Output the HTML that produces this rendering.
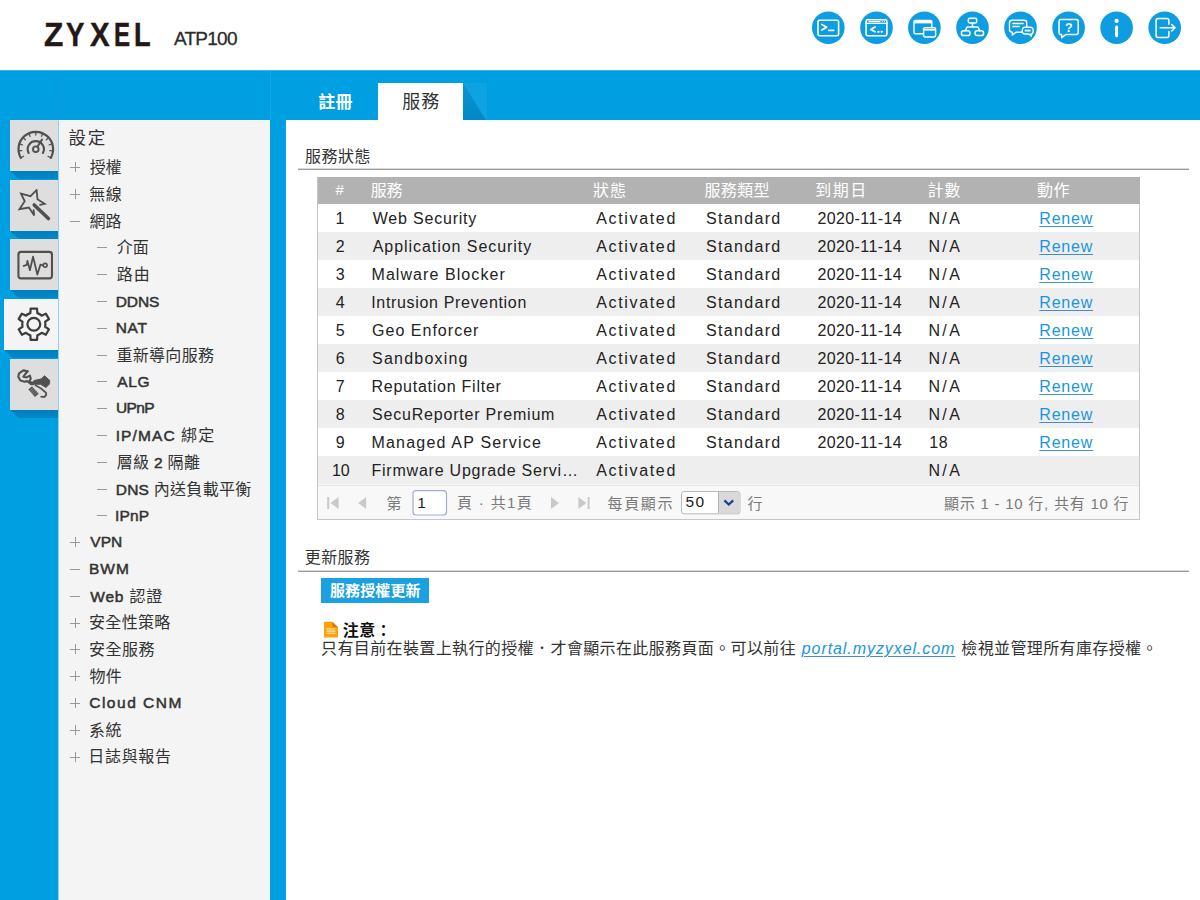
<!DOCTYPE html>
<html lang="zh-Hant">
<head>
<meta charset="utf-8">
<title>ZYXEL ATP100</title>
<style>
*{box-sizing:border-box;margin:0;padding:0}
html,body{width:1200px;height:900px;overflow:hidden;background:#fff}
body{position:relative;font-family:"Liberation Sans","Noto Sans CJK TC",sans-serif;color:#222;font-size:16px}
#hdr{position:absolute;left:0;top:0;width:1200px;height:70px;background:#fff}
#blue{position:absolute;left:0;top:70px;width:1200px;height:830px;background:#009fe1}
#menu{position:absolute;left:58px;top:120px;width:212px;height:780px;background:#f4f4f4;border-top:1px solid #fdfdfd;border-left:1px solid #8ad1f4}
#content{position:absolute;left:286px;top:120px;width:914px;height:780px;background:#fff}
.stab{position:absolute;left:10px;width:48px;height:51px;background:#dedede}
.stab.act{left:4px;width:55px;background:#f4f4f4}
.stab svg{position:absolute;left:0;top:0}
.sshadow{position:absolute;height:8px;background:linear-gradient(to bottom,#007fbd,#0088c8);clip-path:polygon(0 0,100% 0,100% 100%,9px 100%)}
.t{position:absolute;white-space:nowrap;line-height:24px;height:24px;color:#333}
.b{font-weight:bold}
.sb{font-weight:normal;-webkit-text-stroke:0.5px #333}
.sb .n{-webkit-text-stroke:0}
.n{font-weight:normal}
.pm{position:absolute;width:10px;height:10px}
.pm i{position:absolute;display:block}
.tab2{position:absolute;left:378px;top:83px;width:85px;height:37px;background:#fff}
.tabsh{position:absolute;left:463px;top:83px;width:23px;height:37px;background:linear-gradient(to bottom,#0a95d5,#0087c6);clip-path:polygon(0 0,100% 100%,0 100%)}
.tabsh2{position:absolute;left:463px;top:83px;width:24px;height:37px;background:#0da3e3}
.rule{position:absolute;left:298px;width:891px;height:2px;background:linear-gradient(to bottom,#d9d9d9 0,#d9d9d9 50%,#9b9b9b 50%,#9b9b9b 100%)}
#grid{position:absolute;left:317px;top:177px;width:823px;height:343px;border:1px solid #c6c6c6;border-top:none;background:#f8f8f8}
#ghead{position:absolute;left:0;top:0;width:822px;height:27px;background:#b2b2b2}
.row{position:absolute;left:0;width:821px;height:28px}
.row.alt{background:#eeeeee}
.row.wh{background:#fff}
a.l{color:#1b95e0;text-decoration:underline;text-decoration-thickness:1.4px;text-decoration-color:#3f8fd2;text-underline-offset:1.5px}
.inp{position:absolute;background:#fff;border:1px solid #a9b0d6;border-radius:3px}
#btn{position:absolute;left:321px;top:578px;width:108px;height:25px;background:#1ba0e2}
</style>
</head>
<body>
<div id="hdr"><div id="logo" style="position:absolute;left:0;top:0;width:170px;height:70px"><span style="position:absolute;left:44.03px;top:15px;font-weight:bold;font-size:32.5px;line-height:40px;color:#231815;-webkit-text-stroke:0.45px #231815;transform:scaleX(0.972);transform-origin:0 0;display:block">Z</span><span style="position:absolute;left:66.16px;top:15px;font-weight:bold;font-size:32.5px;line-height:40px;color:#231815;-webkit-text-stroke:0.45px #231815;transform:scaleX(0.849);transform-origin:0 0;display:block">Y</span><span style="position:absolute;left:89.77px;top:15px;font-weight:bold;font-size:32.5px;line-height:40px;color:#231815;-webkit-text-stroke:0.45px #231815;transform:scaleX(0.905);transform-origin:0 0;display:block">X</span><span style="position:absolute;left:114.34px;top:15px;font-weight:bold;font-size:32.5px;line-height:40px;color:#231815;-webkit-text-stroke:0.45px #231815;transform:scaleX(0.740);transform-origin:0 0;display:block">E</span><span style="position:absolute;left:133.62px;top:15px;font-weight:bold;font-size:32.5px;line-height:40px;color:#231815;-webkit-text-stroke:0.45px #231815;transform:scaleX(0.836);transform-origin:0 0;display:block">L</span></div><svg style="position:absolute;left:800px;top:0" width="400" height="60" viewBox="800 0 400 60" fill="none" stroke="#fff" stroke-width="1.6" stroke-linecap="round" stroke-linejoin="round">
<g stroke="none" fill="#0d9de0">
<circle cx="828.3" cy="27.8" r="16.3"/><circle cx="876.5" cy="27.8" r="16.3"/><circle cx="924.4" cy="27.8" r="16.3"/><circle cx="972.5" cy="27.8" r="16.3"/>
<circle cx="1020.5" cy="27.8" r="16.3"/><circle cx="1068.6" cy="27.8" r="16.3"/><circle cx="1116.6" cy="27.8" r="16.3"/><circle cx="1164.7" cy="27.8" r="16.3"/>
</g>
<!-- terminal -->
<g transform="translate(828.3 27.8)">
<rect x="-10.3" y="-7.6" width="20.6" height="15.6" rx="1.6"/>
<path d="M-6.4 -3.4 L-1.6 -0.6 L-6.4 2.2" stroke-width="1.7"/><path d="M0.4 2.6 H5.4" stroke-width="1.6"/>
</g>
<!-- code window -->
<g transform="translate(876.5 27.8)">
<rect x="-10.4" y="-8" width="20.8" height="16" rx="1.6"/>
<path d="M-10.4 -4.4 H10.4" stroke-width="1.3"/>
<path d="M-1.4 -0.8 L-5.8 1.6 L-1.4 4" stroke-width="1.7"/>
<path d="M1.6 4 h.6 M5 4 h.6" stroke-width="1.9"/>
<path d="M5.6 -6.2 h.2 M7.8 -6.2 h.2" stroke-width="1" /><path d="M-7.6 -6.2 H3.4" stroke-width="1.1"/>
</g>
<!-- windows -->
<g transform="translate(924.4 27.8)">
<rect x="-10.4" y="-7.4" width="17.8" height="13.4" rx="1.2" stroke-width="1.4"/>
<path d="M-9.8 -5.6 H6.8" stroke-width="2.4" stroke-linecap="butt"/>
<rect x="-0.8" y="-0.2" width="12" height="9.4" rx="1.4" fill="#0d9de0" stroke-width="1.4"/>
<path d="M-0.2 1.9 H10.6" stroke-width="1.9" stroke-linecap="butt"/>
</g>
<!-- network -->
<g transform="translate(972.5 27.8)" stroke-width="1.5">
<rect x="-4.2" y="-9.6" width="8.4" height="4.8" rx="1.6"/>
<path d="M0 -4.8 V-1 M-5.4 -0.8 H5.4 M-5.4 -0.8 L-7.4 3 M5.4 -0.8 L7.4 3"/>
<rect x="-11" y="3" width="8.4" height="4.8" rx="1.9"/>
<rect x="2.6" y="3" width="8.4" height="4.8" rx="1.9"/>
</g>
<!-- chat -->
<g transform="translate(1020.5 27.8)" stroke-width="1.4">
<path d="M-8.4 -7.6 H3.6 a2.6 2.6 0 0 1 2.6 2.6 V1.8 a2.6 2.6 0 0 1 -2.6 2.6 H-4.6 L-8.2 7.2 V4.4 H-8.4 a2.6 2.6 0 0 1 -2.6 -2.6 V-5 a2.6 2.6 0 0 1 2.6 -2.6 Z"/>
<path d="M-7.6 -4.4 H2.6 M-7.6 -1.4 H-1.4" stroke-width="1.5"/>
<path d="M4.4 -0.6 H10 a2.6 2.6 0 0 1 2.6 2.6 V3.6 a2.6 2.6 0 0 1 -2.6 2.6 H10.9 V8.4 L8.2 6.2 H4.4 a2.6 2.6 0 0 1 -2.6 -2.6 V2 a2.6 2.6 0 0 1 2.6 -2.6 Z" fill="#0d9de0"/>
<path d="M4.8 2.8 H9.6" stroke-width="1.6"/>
</g>
<!-- help -->
<g transform="translate(1068.6 27.8)" stroke-width="1.5">
<path d="M-8 -8.2 H8 a1.6 1.6 0 0 1 1.6 1.6 V5 a1.6 1.6 0 0 1 -1.6 1.6 H-2.4 L-7 9.8 V6.6 H-8 a1.6 1.6 0 0 1 -1.6 -1.6 V-6.6 a1.6 1.6 0 0 1 1.6 -1.6 Z"/>
<text x="0.3" y="3.9" text-anchor="middle" font-family="Liberation Sans, sans-serif" font-weight="bold" font-size="12.5" fill="#fff" stroke="none">?</text>
</g>
<!-- info -->
<g transform="translate(1116.6 27.8)" stroke="none" fill="#fff">
<circle cx="0" cy="-6.9" r="2.1"/><rect x="-1.5" y="-2.2" width="3" height="11.6" rx="1.3"/>
</g>
<!-- logout -->
<g transform="translate(1164.7 27.8)" stroke-width="1.5">
<path d="M4.2 -3.6 V-7.4 a2 2 0 0 0 -2 -2 H-6.6 a2 2 0 0 0 -2 2 V7.6 a2 2 0 0 0 2 2 H2.2 a2 2 0 0 0 2 -2 V3.6"/>
<path d="M-4.6 0 H10.2 M7 -3.2 L10.4 0 L7 3.2"/>
</g>
</svg></div>
<div id="blue"></div><div style="position:absolute;left:0;top:70px;width:1200px;height:1px;background:#3db4e9"></div><div style="position:absolute;left:270px;top:71px;width:1px;height:49px;background:#17a7e5"></div><div style="position:absolute;left:59px;top:71px;width:1px;height:49px;background:#0f98d8"></div>
<div class="sshadow" style="top:171px;left:10px;width:49px"></div>
<div class="stab" style="top:120px"><svg width="49" height="51" viewBox="0 0 49 51" fill="none" stroke="#505050" stroke-linecap="round" stroke-linejoin="round"><path d="M10.82 37.85 A17.3 17.3 0 1 1 40.78 37.85" stroke-width="2.2"/><path d="M40.09 37.45L38.01 36.25M42.21 30.92L39.82 30.67M41.49 24.10L39.21 24.84M38.06 18.16L36.28 19.77M32.51 14.13L31.53 16.32M25.80 12.70L25.80 15.10M19.09 14.13L20.07 16.32M13.54 18.16L15.32 19.77M10.11 24.10L12.39 24.84M9.39 30.92L11.78 30.67M11.51 37.45L13.59 36.25" stroke-width="1.3"/><path d="M18.65 33.00 A8.1 8.1 0 1 1 32.95 33.00" stroke-width="2.1"/><circle cx="25.80" cy="29.20" r="2.8" stroke-width="1.9"/><path d="M27.40 26.80 L32.00 19.60" stroke-width="2"/></svg></div>
<div class="sshadow" style="top:231px;left:10px;width:49px"></div>
<div class="stab" style="top:180px"><svg width="49" height="51" viewBox="0 0 49 51" fill="none" stroke="#505050" stroke-linecap="round" stroke-linejoin="miter"><path d="M26.56 10.17 L20.49 16.16 L11.0 13.67 L14.73 21.29 L9.44 29.22 L18.93 27.51 L24.22 35.44 L23.6 30.16" stroke-width="1.8"/><path d="M30.06 24.94 L34.72 23.78 L27.49 19.27 L26.56 10.17" stroke-width="1.8"/><path d="M24.22 24.94 L38.38 38.56" stroke-width="3.6"/></svg></div>
<div class="sshadow" style="top:290px;left:10px;width:49px"></div>
<div class="stab" style="top:239px"><svg width="49" height="51" viewBox="0 0 49 51" fill="none" stroke="#505050" stroke-linecap="round" stroke-linejoin="round"><rect x="8.43" y="12.88" width="33.53" height="26.52" rx="2.6" stroke-width="2.1"/><path d="M13.72 26.96 L16.83 25.94 L17.38 21.82 L19.94 31.16 L23.06 17.62 L27.33 35.51 L30.44 25.71 L32.62 26.02" stroke-width="1.8"/><circle cx="35.11" cy="26.33" r="1.9" stroke-width="1.7"/></svg></div>
<div class="sshadow" style="top:350px;left:4px;width:55px"></div>
<div class="stab act" style="top:299px"><svg width="55" height="51" viewBox="0 0 55 51" fill="none" stroke="#3c3c3c" stroke-linecap="round" stroke-linejoin="round"><path d="M33.32 14.16 L33.02 9.54 L26.64 9.54 L26.35 14.16 A11.6 11.6 0 0 0 22.0 16.67 L17.85 14.62 L14.66 20.15 L18.51 22.71 A11.6 11.6 0 0 0 18.51 27.73 L14.66 30.3 L17.85 35.82 L22.0 33.77 A11.6 11.6 0 0 0 26.35 36.29 L26.64 40.9 L33.02 40.9 L33.32 36.29 A11.6 11.6 0 0 0 37.67 33.77 L41.82 35.82 L45.01 30.3 L41.16 27.73 A11.6 11.6 0 0 0 41.16 22.71 L45.01 20.15 L41.82 14.62 L37.67 16.67 A11.6 11.6 0 0 0 33.32 14.16 Z" stroke-width="2.2"/><circle cx="29.83" cy="25.22" r="6.4" stroke-width="2.2"/></svg></div>
<div class="sshadow" style="top:410px;left:10px;width:49px"></div>
<div class="stab" style="top:359px"><svg width="49" height="51" viewBox="0 0 49 51" fill="none" stroke="#505050" stroke-linecap="round" stroke-linejoin="round"><path d="M17.61 12.39 L13.33 11.38 L9.06 14.33 L8.28 17.83 L10.38 21.49 L14.73 22.73 L17.38 22.11 L21.11 25.22" stroke-width="2.1"/><path d="M17.61 12.39 L14.73 15.73 L13.33 17.83 L16.44 18.38 L19.94 16.67 L20.72 19.78 L19.56 22.11 L23.06 25.22" stroke-width="2.1"/><path d="M21.5 24.06 L24.22 21.49 L31.22 19.93 L34.49 16.82 L39.78 21.49 L39.16 25.22 L36.04 28.49 L30.44 25.22 L25.0 25.22 Z" fill="#505050" stroke-width="1"/><path d="M20.18 28.8 L27.02 36.58" stroke-width="5" stroke-linecap="butt" stroke-dasharray="1.75 0.3"/><path d="M25.39 26.16 Q30.44 28.33 35.89 33.62 Q37.11 36.11 34.33 38.06 L31.22 37.67" stroke-width="1.7"/></svg></div>
<div id="menu"></div>
<span class="pm" style="left:70px;top:162px"><i style="left:0;top:4.5px;width:10px;height:1px;background:#999"></i><i style="left:4.5px;top:0;width:1px;height:10px;background:#999"></i></span>
<span class="pm" style="left:70px;top:189px"><i style="left:0;top:4.5px;width:10px;height:1px;background:#999"></i><i style="left:4.5px;top:0;width:1px;height:10px;background:#999"></i></span>
<span class="pm" style="left:70px;top:216px"><i style="left:0;top:4.5px;width:10px;height:1px;background:#999"></i></span>
<span class="pm" style="left:96.5px;top:242px"><i style="left:0;top:4.5px;width:10px;height:1px;background:#999"></i></span>
<span class="pm" style="left:96.5px;top:269px"><i style="left:0;top:4.5px;width:10px;height:1px;background:#999"></i></span>
<span class="pm" style="left:96.5px;top:296px"><i style="left:0;top:4.5px;width:10px;height:1px;background:#999"></i></span>
<span class="pm" style="left:96.5px;top:323px"><i style="left:0;top:4.5px;width:10px;height:1px;background:#999"></i></span>
<span class="pm" style="left:96.5px;top:350px"><i style="left:0;top:4.5px;width:10px;height:1px;background:#999"></i></span>
<span class="pm" style="left:96.5px;top:376px"><i style="left:0;top:4.5px;width:10px;height:1px;background:#999"></i></span>
<span class="pm" style="left:96.5px;top:403px"><i style="left:0;top:4.5px;width:10px;height:1px;background:#999"></i></span>
<span class="pm" style="left:96.5px;top:430px"><i style="left:0;top:4.5px;width:10px;height:1px;background:#999"></i></span>
<span class="pm" style="left:96.5px;top:457px"><i style="left:0;top:4.5px;width:10px;height:1px;background:#999"></i></span>
<span class="pm" style="left:96.5px;top:484px"><i style="left:0;top:4.5px;width:10px;height:1px;background:#999"></i></span>
<span class="pm" style="left:96.5px;top:510px"><i style="left:0;top:4.5px;width:10px;height:1px;background:#999"></i></span>
<span class="pm" style="left:70px;top:537px"><i style="left:0;top:4.5px;width:10px;height:1px;background:#999"></i><i style="left:4.5px;top:0;width:1px;height:10px;background:#999"></i></span>
<span class="pm" style="left:70px;top:564px"><i style="left:0;top:4.5px;width:10px;height:1px;background:#999"></i></span>
<span class="pm" style="left:70px;top:591px"><i style="left:0;top:4.5px;width:10px;height:1px;background:#999"></i></span>
<span class="pm" style="left:70px;top:618px"><i style="left:0;top:4.5px;width:10px;height:1px;background:#999"></i><i style="left:4.5px;top:0;width:1px;height:10px;background:#999"></i></span>
<span class="pm" style="left:70px;top:644px"><i style="left:0;top:4.5px;width:10px;height:1px;background:#999"></i><i style="left:4.5px;top:0;width:1px;height:10px;background:#999"></i></span>
<span class="pm" style="left:70px;top:671px"><i style="left:0;top:4.5px;width:10px;height:1px;background:#999"></i><i style="left:4.5px;top:0;width:1px;height:10px;background:#999"></i></span>
<span class="pm" style="left:70px;top:698px"><i style="left:0;top:4.5px;width:10px;height:1px;background:#999"></i><i style="left:4.5px;top:0;width:1px;height:10px;background:#999"></i></span>
<span class="pm" style="left:70px;top:725px"><i style="left:0;top:4.5px;width:10px;height:1px;background:#999"></i><i style="left:4.5px;top:0;width:1px;height:10px;background:#999"></i></span>
<span class="pm" style="left:70px;top:752px"><i style="left:0;top:4.5px;width:10px;height:1px;background:#999"></i><i style="left:4.5px;top:0;width:1px;height:10px;background:#999"></i></span>
<div id="content"></div>
<div class="tabsh2"></div><div class="tabsh"></div><div class="tab2"></div>
<div class="rule" style="top:168px"></div><div class="rule" style="top:570px"></div>
<div id="grid"><div id="ghead"></div><div class="row wh" style="top:27px"></div><div class="row alt" style="top:55px"></div><div class="row wh" style="top:83px"></div><div class="row alt" style="top:111px"></div><div class="row wh" style="top:139px"></div><div class="row alt" style="top:167px"></div><div class="row wh" style="top:195px"></div><div class="row alt" style="top:223px"></div><div class="row wh" style="top:251px"></div><div class="row alt" style="top:279px"></div></div>
<svg style="position:absolute;left:317px;top:485px" width="823" height="35" viewBox="317 485 823 35">
<line x1="318" y1="485.5" x2="1139" y2="485.5" stroke="#e4e4e4" stroke-width="1"/>
<g fill="#c9c9c9">
<rect x="327.2" y="497" width="2" height="12"/><path d="M338.6 497 L338.6 509 L330.4 503 Z"/>
<path d="M366.2 497 L366.2 509 L358.2 503 Z"/>
<path d="M551 497 L551 509 L559 503 Z"/>
<path d="M578.4 497 L578.4 509 L586.4 503 Z"/><rect x="587.6" y="497" width="2" height="12"/>
</g>
<rect x="413" y="490.7" width="33.5" height="24.3" rx="3" fill="#fff" stroke="#a4abd4" stroke-width="1.2"/>
<rect x="681.5" y="491.5" width="58.5" height="22.3" rx="2.5" fill="#fff" stroke="#b9b9b9" stroke-width="1"/>
<path d="M718.5 492 H737.5 a2 2 0 0 1 2 2 V511.3 a2 2 0 0 1 -2 2 H718.5 Z" fill="#d9d9d9"/>
<path d="M718.5 492 V513.3" stroke="#b5b5b5" stroke-width="1"/>
<path d="M724.4 500.4 L728.8 504.6 L733.2 500.4" fill="none" stroke="#1d3f8f" stroke-width="2.2" stroke-linejoin="miter"/>
</svg>
<div id="btn"></div>
<svg style="position:absolute;left:323px;top:621px" width="16" height="18" viewBox="0 0 16 18">
<path d="M1.8 0.8 H9.4 L15 6.2 V15.8 a0.8 0.8 0 0 1 -0.8 0.8 H1.8 a0.8 0.8 0 0 1 -0.8 -0.8 V1.6 a0.8 0.8 0 0 1 0.8 -0.8 Z" fill="#ffa10a"/>
<path d="M9.4 0.8 L15 6.2 H10.2 a0.8 0.8 0 0 1 -0.8 -0.8 Z" fill="#d27f06"/>
<path d="M3.4 7.8 H12.4 M3.4 10.1 H12.4 M3.4 12.4 H12.4" stroke="#ffe2b0" stroke-width="1.3"/>
</svg>
<span id="model" class="t " style="left:174.00px;top:27.30px;font-size:19px;color:#2b2b2b;letter-spacing:-0.760px;-webkit-text-stroke:0.3px #2b2b2b;">ATP100</span>
<span id="mtitle" class="t " style="left:68.40px;top:125.90px;font-size:17.5px;color:#333;letter-spacing:1.850px;">設定</span>
<span id="m0" class="t " style="left:89.80px;top:156.10px;font-size:16px;color:#333;letter-spacing:-0.300px;">授權</span>
<span id="m1" class="t " style="left:89.30px;top:183.10px;font-size:16px;color:#333;letter-spacing:0.450px;">無線</span>
<span id="m2" class="t " style="left:89.55px;top:209.90px;font-size:16px;color:#333;letter-spacing:-0.050px;">網路</span>
<span id="m3" class="t " style="left:116.70px;top:236.40px;font-size:16px;color:#333;letter-spacing:0.050px;">介面</span>
<span id="m4" class="t " style="left:116.70px;top:263.40px;font-size:16px;color:#333;letter-spacing:1.050px;">路由</span>
<span id="m5" class="t sb" style="left:115.70px;top:289.90px;font-size:15.5px;color:#333;letter-spacing:-0.068px;">DDNS</span>
<span id="m6" class="t sb" style="left:115.70px;top:316.10px;font-size:15.5px;color:#333;letter-spacing:0.675px;">NAT</span>
<span id="m7" class="t " style="left:116.45px;top:344.00px;font-size:16px;color:#333;letter-spacing:0.310px;">重新導向服務</span>
<span id="m8" class="t sb" style="left:117.20px;top:369.80px;font-size:15.5px;color:#333;letter-spacing:0.650px;">ALG</span>
<span id="m9" class="t sb" style="left:115.95px;top:395.90px;font-size:15.5px;color:#333;letter-spacing:-0.651px;">UPnP</span>
<span id="m10" class="t sb" style="left:115.70px;top:424.40px;font-size:15.5px;color:#333;letter-spacing:1.101px;">IP/MAC <span class="n" style="font-size:16px">綁定</span></span>
<span id="m11" class="t sb" style="left:116.70px;top:451.00px;font-size:15.5px;color:#333;letter-spacing:0.334px;"><span class="n" style="font-size:16px">層級</span> 2 <span class="n" style="font-size:16px">隔離</span></span>
<span id="m12" class="t sb" style="left:115.70px;top:477.60px;font-size:15.5px;color:#333;letter-spacing:0.273px;">DNS <span class="n" style="font-size:16px">內送負載平衡</span></span>
<span id="m13" class="t sb" style="left:115.05px;top:503.50px;font-size:15.5px;color:#333;letter-spacing:0.151px;">IPnP</span>
<span id="m14" class="t sb" style="left:90.30px;top:530.30px;font-size:15.5px;color:#333;letter-spacing:0.075px;">VPN</span>
<span id="m15" class="t sb" style="left:89.05px;top:557.40px;font-size:15.5px;color:#333;letter-spacing:0.950px;">BWM</span>
<span id="m16" class="t sb" style="left:90.30px;top:584.60px;font-size:15.5px;color:#333;letter-spacing:0.800px;">Web <span class="n" style="font-size:16px">認證</span></span>
<span id="m17" class="t " style="left:89.05px;top:611.40px;font-size:16px;color:#333;letter-spacing:0.298px;">安全性策略</span>
<span id="m18" class="t " style="left:89.05px;top:638.40px;font-size:16px;color:#333;letter-spacing:0.484px;">安全服務</span>
<span id="m19" class="t " style="left:89.55px;top:664.90px;font-size:16px;color:#333;letter-spacing:0.200px;">物件</span>
<span id="m20" class="t sb" style="left:89.20px;top:690.90px;font-size:15.5px;color:#333;letter-spacing:1.520px;">Cloud CNM</span>
<span id="m21" class="t " style="left:89.05px;top:718.90px;font-size:16px;color:#333;letter-spacing:0.450px;">系統</span>
<span id="m22" class="t " style="left:88.25px;top:745.40px;font-size:16px;color:#333;letter-spacing:0.688px;">日誌與報告</span>
<span id="tab1" class="t b" style="left:318.25px;top:91.30px;font-size:17px;color:#fff;letter-spacing:0.250px;">註冊</span>
<span id="tab2" class="t " style="left:402.25px;top:89.80px;font-size:18px;color:#333;letter-spacing:1.000px;">服務</span>
<span id="sec1" class="t " style="left:305.00px;top:144.60px;font-size:16px;color:#333;letter-spacing:0.500px;">服務狀態</span>
<span id="sec2" class="t " style="left:304.80px;top:546.00px;font-size:16px;color:#333;letter-spacing:0.382px;">更新服務</span>
<span id="h0" class="t " style="left:335.48px;top:178.00px;font-size:15px;color:#fff;letter-spacing:0.000px;">#</span>
<span id="h1" class="t " style="left:370.75px;top:179.00px;font-size:16px;color:#fff;letter-spacing:-0.250px;">服務</span>
<span id="h2" class="t " style="left:593.00px;top:179.00px;font-size:16px;color:#fff;letter-spacing:1.000px;">狀態</span>
<span id="h3" class="t " style="left:704.50px;top:179.00px;font-size:16px;color:#fff;letter-spacing:0.333px;">服務類型</span>
<span id="h4" class="t " style="left:815.15px;top:179.00px;font-size:16px;color:#fff;letter-spacing:1.550px;">到期日</span>
<span id="h5" class="t " style="left:927.45px;top:179.00px;font-size:16px;color:#fff;letter-spacing:1.000px;">計數</span>
<span id="h6" class="t " style="left:1037.05px;top:179.00px;font-size:16px;color:#fff;letter-spacing:0.450px;">動作</span>
<span id="r0n" class="t " style="left:335.50px;top:207.00px;font-size:16px;color:#222;letter-spacing:0.000px;">1</span>
<span id="r0s" class="t " style="left:372.75px;top:207.00px;font-size:16px;color:#222;letter-spacing:0.795px;">Web Security</span>
<span id="r0a" class="t " style="left:596.25px;top:207.00px;font-size:16px;color:#222;letter-spacing:1.656px;">Activated</span>
<span id="r0t" class="t " style="left:706.00px;top:207.00px;font-size:16px;color:#222;letter-spacing:1.321px;">Standard</span>
<span id="r0d" class="t " style="left:817.40px;top:207.00px;font-size:16px;color:#222;letter-spacing:0.405px;">2020-11-14</span>
<span id="r0r" class="t " style="left:1039.30px;top:207.00px;font-size:16px;color:#1b95e0;letter-spacing:0.774px;"><a class="l">Renew</a></span>
<span id="r0c" class="t " style="left:928.45px;top:207.00px;font-size:16px;color:#222;letter-spacing:2.375px;">N/A</span>
<span id="r1n" class="t " style="left:335.75px;top:235.00px;font-size:16px;color:#222;letter-spacing:0.000px;">2</span>
<span id="r1s" class="t " style="left:372.75px;top:235.00px;font-size:16px;color:#222;letter-spacing:0.947px;">Application Security</span>
<span id="r1a" class="t " style="left:596.25px;top:235.00px;font-size:16px;color:#222;letter-spacing:1.656px;">Activated</span>
<span id="r1t" class="t " style="left:706.00px;top:235.00px;font-size:16px;color:#222;letter-spacing:1.321px;">Standard</span>
<span id="r1d" class="t " style="left:817.40px;top:235.00px;font-size:16px;color:#222;letter-spacing:0.405px;">2020-11-14</span>
<span id="r1r" class="t " style="left:1039.30px;top:235.00px;font-size:16px;color:#1b95e0;letter-spacing:0.774px;"><a class="l">Renew</a></span>
<span id="r1c" class="t " style="left:928.45px;top:235.00px;font-size:16px;color:#222;letter-spacing:2.375px;">N/A</span>
<span id="r2n" class="t " style="left:335.75px;top:263.00px;font-size:16px;color:#222;letter-spacing:0.000px;">3</span>
<span id="r2s" class="t " style="left:371.50px;top:263.00px;font-size:16px;color:#222;letter-spacing:1.071px;">Malware Blocker</span>
<span id="r2a" class="t " style="left:596.25px;top:263.00px;font-size:16px;color:#222;letter-spacing:1.656px;">Activated</span>
<span id="r2t" class="t " style="left:706.00px;top:263.00px;font-size:16px;color:#222;letter-spacing:1.321px;">Standard</span>
<span id="r2d" class="t " style="left:817.40px;top:263.00px;font-size:16px;color:#222;letter-spacing:0.405px;">2020-11-14</span>
<span id="r2r" class="t " style="left:1039.30px;top:263.00px;font-size:16px;color:#1b95e0;letter-spacing:0.774px;"><a class="l">Renew</a></span>
<span id="r2c" class="t " style="left:928.45px;top:263.00px;font-size:16px;color:#222;letter-spacing:2.375px;">N/A</span>
<span id="r3n" class="t " style="left:335.75px;top:291.00px;font-size:16px;color:#222;letter-spacing:0.000px;">4</span>
<span id="r3s" class="t " style="left:371.25px;top:291.00px;font-size:16px;color:#222;letter-spacing:0.671px;">Intrusion Prevention</span>
<span id="r3a" class="t " style="left:596.25px;top:291.00px;font-size:16px;color:#222;letter-spacing:1.656px;">Activated</span>
<span id="r3t" class="t " style="left:706.00px;top:291.00px;font-size:16px;color:#222;letter-spacing:1.321px;">Standard</span>
<span id="r3d" class="t " style="left:817.40px;top:291.00px;font-size:16px;color:#222;letter-spacing:0.405px;">2020-11-14</span>
<span id="r3r" class="t " style="left:1039.30px;top:291.00px;font-size:16px;color:#1b95e0;letter-spacing:0.774px;"><a class="l">Renew</a></span>
<span id="r3c" class="t " style="left:928.45px;top:291.00px;font-size:16px;color:#222;letter-spacing:2.375px;">N/A</span>
<span id="r4n" class="t " style="left:335.76px;top:319.00px;font-size:16px;color:#222;letter-spacing:0.000px;">5</span>
<span id="r4s" class="t " style="left:372.00px;top:319.00px;font-size:16px;color:#222;letter-spacing:1.023px;">Geo Enforcer</span>
<span id="r4a" class="t " style="left:596.25px;top:319.00px;font-size:16px;color:#222;letter-spacing:1.656px;">Activated</span>
<span id="r4t" class="t " style="left:706.00px;top:319.00px;font-size:16px;color:#222;letter-spacing:1.321px;">Standard</span>
<span id="r4d" class="t " style="left:817.40px;top:319.00px;font-size:16px;color:#222;letter-spacing:0.405px;">2020-11-14</span>
<span id="r4r" class="t " style="left:1039.30px;top:319.00px;font-size:16px;color:#1b95e0;letter-spacing:0.774px;"><a class="l">Renew</a></span>
<span id="r4c" class="t " style="left:928.45px;top:319.00px;font-size:16px;color:#222;letter-spacing:2.375px;">N/A</span>
<span id="r5n" class="t " style="left:335.63px;top:347.00px;font-size:16px;color:#222;letter-spacing:0.000px;">6</span>
<span id="r5s" class="t " style="left:372.00px;top:347.00px;font-size:16px;color:#222;letter-spacing:1.222px;">Sandboxing</span>
<span id="r5a" class="t " style="left:596.25px;top:347.00px;font-size:16px;color:#222;letter-spacing:1.656px;">Activated</span>
<span id="r5t" class="t " style="left:706.00px;top:347.00px;font-size:16px;color:#222;letter-spacing:1.321px;">Standard</span>
<span id="r5d" class="t " style="left:817.40px;top:347.00px;font-size:16px;color:#222;letter-spacing:0.405px;">2020-11-14</span>
<span id="r5r" class="t " style="left:1039.30px;top:347.00px;font-size:16px;color:#1b95e0;letter-spacing:0.774px;"><a class="l">Renew</a></span>
<span id="r5c" class="t " style="left:928.45px;top:347.00px;font-size:16px;color:#222;letter-spacing:2.375px;">N/A</span>
<span id="r6n" class="t " style="left:335.75px;top:375.00px;font-size:16px;color:#222;letter-spacing:0.000px;">7</span>
<span id="r6s" class="t " style="left:371.50px;top:375.00px;font-size:16px;color:#222;letter-spacing:0.750px;">Reputation Filter</span>
<span id="r6a" class="t " style="left:596.25px;top:375.00px;font-size:16px;color:#222;letter-spacing:1.656px;">Activated</span>
<span id="r6t" class="t " style="left:706.00px;top:375.00px;font-size:16px;color:#222;letter-spacing:1.321px;">Standard</span>
<span id="r6d" class="t " style="left:817.40px;top:375.00px;font-size:16px;color:#222;letter-spacing:0.405px;">2020-11-14</span>
<span id="r6r" class="t " style="left:1039.30px;top:375.00px;font-size:16px;color:#1b95e0;letter-spacing:0.774px;"><a class="l">Renew</a></span>
<span id="r6c" class="t " style="left:928.45px;top:375.00px;font-size:16px;color:#222;letter-spacing:2.375px;">N/A</span>
<span id="r7n" class="t " style="left:335.76px;top:403.00px;font-size:16px;color:#222;letter-spacing:0.000px;">8</span>
<span id="r7s" class="t " style="left:372.00px;top:403.00px;font-size:16px;color:#222;letter-spacing:0.802px;">SecuReporter Premium</span>
<span id="r7a" class="t " style="left:596.25px;top:403.00px;font-size:16px;color:#222;letter-spacing:1.656px;">Activated</span>
<span id="r7t" class="t " style="left:706.00px;top:403.00px;font-size:16px;color:#222;letter-spacing:1.321px;">Standard</span>
<span id="r7d" class="t " style="left:817.40px;top:403.00px;font-size:16px;color:#222;letter-spacing:0.405px;">2020-11-14</span>
<span id="r7r" class="t " style="left:1039.30px;top:403.00px;font-size:16px;color:#1b95e0;letter-spacing:0.774px;"><a class="l">Renew</a></span>
<span id="r7c" class="t " style="left:928.45px;top:403.00px;font-size:16px;color:#222;letter-spacing:2.375px;">N/A</span>
<span id="r8n" class="t " style="left:335.76px;top:431.00px;font-size:16px;color:#222;letter-spacing:0.000px;">9</span>
<span id="r8s" class="t " style="left:371.50px;top:431.00px;font-size:16px;color:#222;letter-spacing:1.191px;">Managed AP Service</span>
<span id="r8a" class="t " style="left:596.25px;top:431.00px;font-size:16px;color:#222;letter-spacing:1.656px;">Activated</span>
<span id="r8t" class="t " style="left:706.00px;top:431.00px;font-size:16px;color:#222;letter-spacing:1.321px;">Standard</span>
<span id="r8d" class="t " style="left:817.40px;top:431.00px;font-size:16px;color:#222;letter-spacing:0.405px;">2020-11-14</span>
<span id="r8r" class="t " style="left:1039.30px;top:431.00px;font-size:16px;color:#1b95e0;letter-spacing:0.774px;"><a class="l">Renew</a></span>
<span id="r8c" class="t " style="left:929.25px;top:431.00px;font-size:16px;color:#222;letter-spacing:0.500px;">18</span>
<span id="r9n" class="t " style="left:332.00px;top:459.00px;font-size:16px;color:#222;letter-spacing:-0.250px;">10</span>
<span id="r9s" class="t " style="left:371.50px;top:459.00px;font-size:16px;color:#222;letter-spacing:0.773px;">Firmware Upgrade Servi…</span>
<span id="r9a" class="t " style="left:596.25px;top:459.00px;font-size:16px;color:#222;letter-spacing:1.656px;">Activated</span>
<span id="r9c" class="t " style="left:928.45px;top:459.00px;font-size:16px;color:#222;letter-spacing:2.375px;">N/A</span>
<span id="p1" class="t " style="left:386.38px;top:491.50px;font-size:15px;color:#7a7a7a;letter-spacing:0.000px;">第</span>
<span id="p2" class="t " style="left:417.25px;top:491.00px;font-size:15.5px;color:#222;letter-spacing:0.000px;">1</span>
<span id="p3" class="t " style="left:457.00px;top:491.00px;font-size:15px;color:#7a7a7a;letter-spacing:1.333px;">頁 · 共1頁</span>
<span id="p4" class="t " style="left:607.50px;top:491.50px;font-size:15px;color:#7a7a7a;letter-spacing:1.667px;">每頁顯示</span>
<span id="p5" class="t " style="left:685.50px;top:490.00px;font-size:15.5px;color:#222;letter-spacing:1.500px;">50</span>
<span id="p6" class="t " style="left:747.62px;top:491.50px;font-size:15px;color:#7a7a7a;letter-spacing:0.000px;">行</span>
<span id="p7" class="t " style="left:944.00px;top:491.50px;font-size:15px;color:#7a7a7a;letter-spacing:0.763px;">顯示 1 - 10 行, 共有 10 行</span>
<span id="btnt" class="t b" style="left:330.00px;top:578.50px;font-size:15px;color:#fff;letter-spacing:0.100px;">服務授權更新</span>
<span id="note1" class="t b" style="left:342.75px;top:619.00px;font-size:16px;color:#111;letter-spacing:0.375px;">注意：</span>
<span id="note2a" class="t " style="left:321.00px;top:637.00px;font-size:16px;color:#333;letter-spacing:0.384px;">只有目前在裝置上執行的授權．才會顯示在此服務頁面。可以前往</span>
<span id="note2b" class="t " style="left:801.75px;top:637.00px;font-size:16px;color:#1b95e0;letter-spacing:0.926px;"><a class="l" style="font-style:italic">portal.myzyxel.com</a></span>
<span id="note2c" class="t " style="left:961.25px;top:637.00px;font-size:16px;color:#333;letter-spacing:0.386px;">檢視並管理所有庫存授權。</span>
</body>
</html>
